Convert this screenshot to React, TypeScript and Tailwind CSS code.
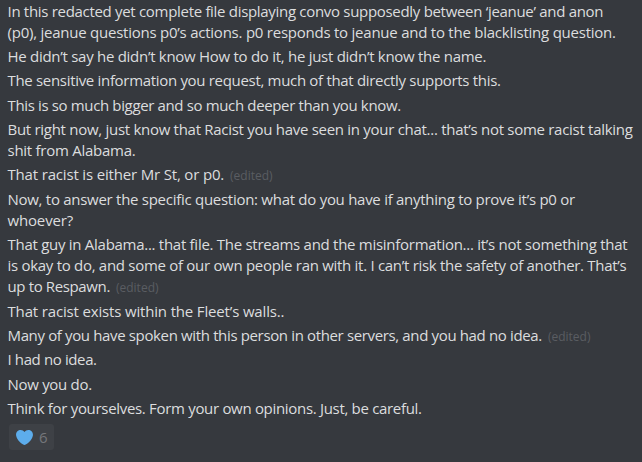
type Line = { text: string; spacing: string; edited?: boolean };

const messages: Line[][] = [
  [
    { text: "In this redacted yet complete file displaying convo supposedly between ‘jeanue’ and anon", spacing: "tracking-[-0.307px]" },
    { text: "(p0), jeanue questions p0’s actions. p0 responds to jeanue and to the blacklisting question.", spacing: "tracking-[-0.238px]" },
  ],
  [{ text: "He didn’t say he didn’t know How to do it, he just didn’t know the name.", spacing: "tracking-[-0.28px]" }],
  [{ text: "The sensitive information you request, much of that directly supports this.", spacing: "tracking-[-0.315px]" }],
  [{ text: "This is so much bigger and so much deeper than you know.", spacing: "tracking-[-0.357px]" }],
  [
    { text: "But right now, just know that Racist you have seen in your chat... that’s not some racist talking", spacing: "tracking-[-0.286px]" },
    { text: "shit from Alabama.", spacing: "tracking-[-0.26px]" },
  ],
  [{ text: "That racist is either Mr St, or p0.", spacing: "tracking-[-0.17px]", edited: true }],
  [
    { text: "Now, to answer the specific question: what do you have if anything to prove it’s p0 or", spacing: "tracking-[-0.277px]" },
    { text: "whoever?", spacing: "tracking-[-0.16px]" },
  ],
  [
    { text: "That guy in Alabama... that file. The streams and the misinformation... it’s not something that", spacing: "tracking-[-0.277px]" },
    { text: "is okay to do, and some of our own people ran with it. I can’t risk the safety of another. That’s", spacing: "tracking-[-0.292px]" },
    { text: "up to Respawn.", spacing: "tracking-[-0.37px]", edited: true },
  ],
  [{ text: "That racist exists within the Fleet’s walls..", spacing: "tracking-[-0.16px]" }],
  [{ text: "Many of you have spoken with this person in other servers, and you had no idea.", spacing: "tracking-[-0.357px]", edited: true }],
  [{ text: "I had no idea.", spacing: "tracking-[-0.38px]" }],
  [{ text: "Now you do.", spacing: "tracking-[-0.3px]" }],
  [{ text: "Think for yourselves. Form your own opinions. Just, be careful.", spacing: "tracking-[-0.312px]" }],
];

function Message({ lines }: { lines: Line[] }) {
  return (
    <div>
      {lines.map((line) => (
        <p key={line.text} className="flex items-baseline whitespace-nowrap">
          <span className={line.spacing}>{line.text}</span>
          {line.edited && <span className="ml-1.5 text-xs leading-none text-[#5a5d62]">(edited)</span>}
        </p>
      ))}
    </div>
  );
}

function Reaction({ count }: { count: number }) {
  return (
    <button className="ml-[1.5px] mt-[5.4px] flex h-[26px] w-[45px] items-center rounded-[3px] bg-[#3e4146] pl-[7px]">
      <svg viewBox="0 1.9 36 32.2" className="h-[15px] w-[17px]" preserveAspectRatio="none" aria-hidden="true">
        <path
          fill="#5dadec"
          d="M35.885 11.833c0-5.45-4.418-9.868-9.867-9.868-3.308 0-6.227 1.633-8.018 4.129-1.791-2.496-4.71-4.129-8.017-4.129-5.45 0-9.868 4.417-9.868 9.868 0 .772.098 1.52.266 2.241C1.751 22.587 11.216 31.568 18 34.034c6.783-2.466 16.249-11.447 17.617-19.959.17-.721.268-1.469.268-2.242z"
        />
      </svg>
      <span className="ml-1.5 text-[#75777b]">{count}</span>
    </button>
  );
}

export default function App() {
  return (
    <main className="h-[462px] w-[642px] overflow-hidden bg-[#36393e] pl-[7.5px] pt-[0.7px] font-['Open_Sans','Noto_Sans',sans-serif] text-[15px] leading-[21.1px] text-[#dcddde]">
      <div className="flex flex-col gap-[3.23px]">
        {messages.map((lines) => (
          <Message key={lines[0].text} lines={lines} />
        ))}
      </div>
      <Reaction count={6} />
    </main>
  );
}
